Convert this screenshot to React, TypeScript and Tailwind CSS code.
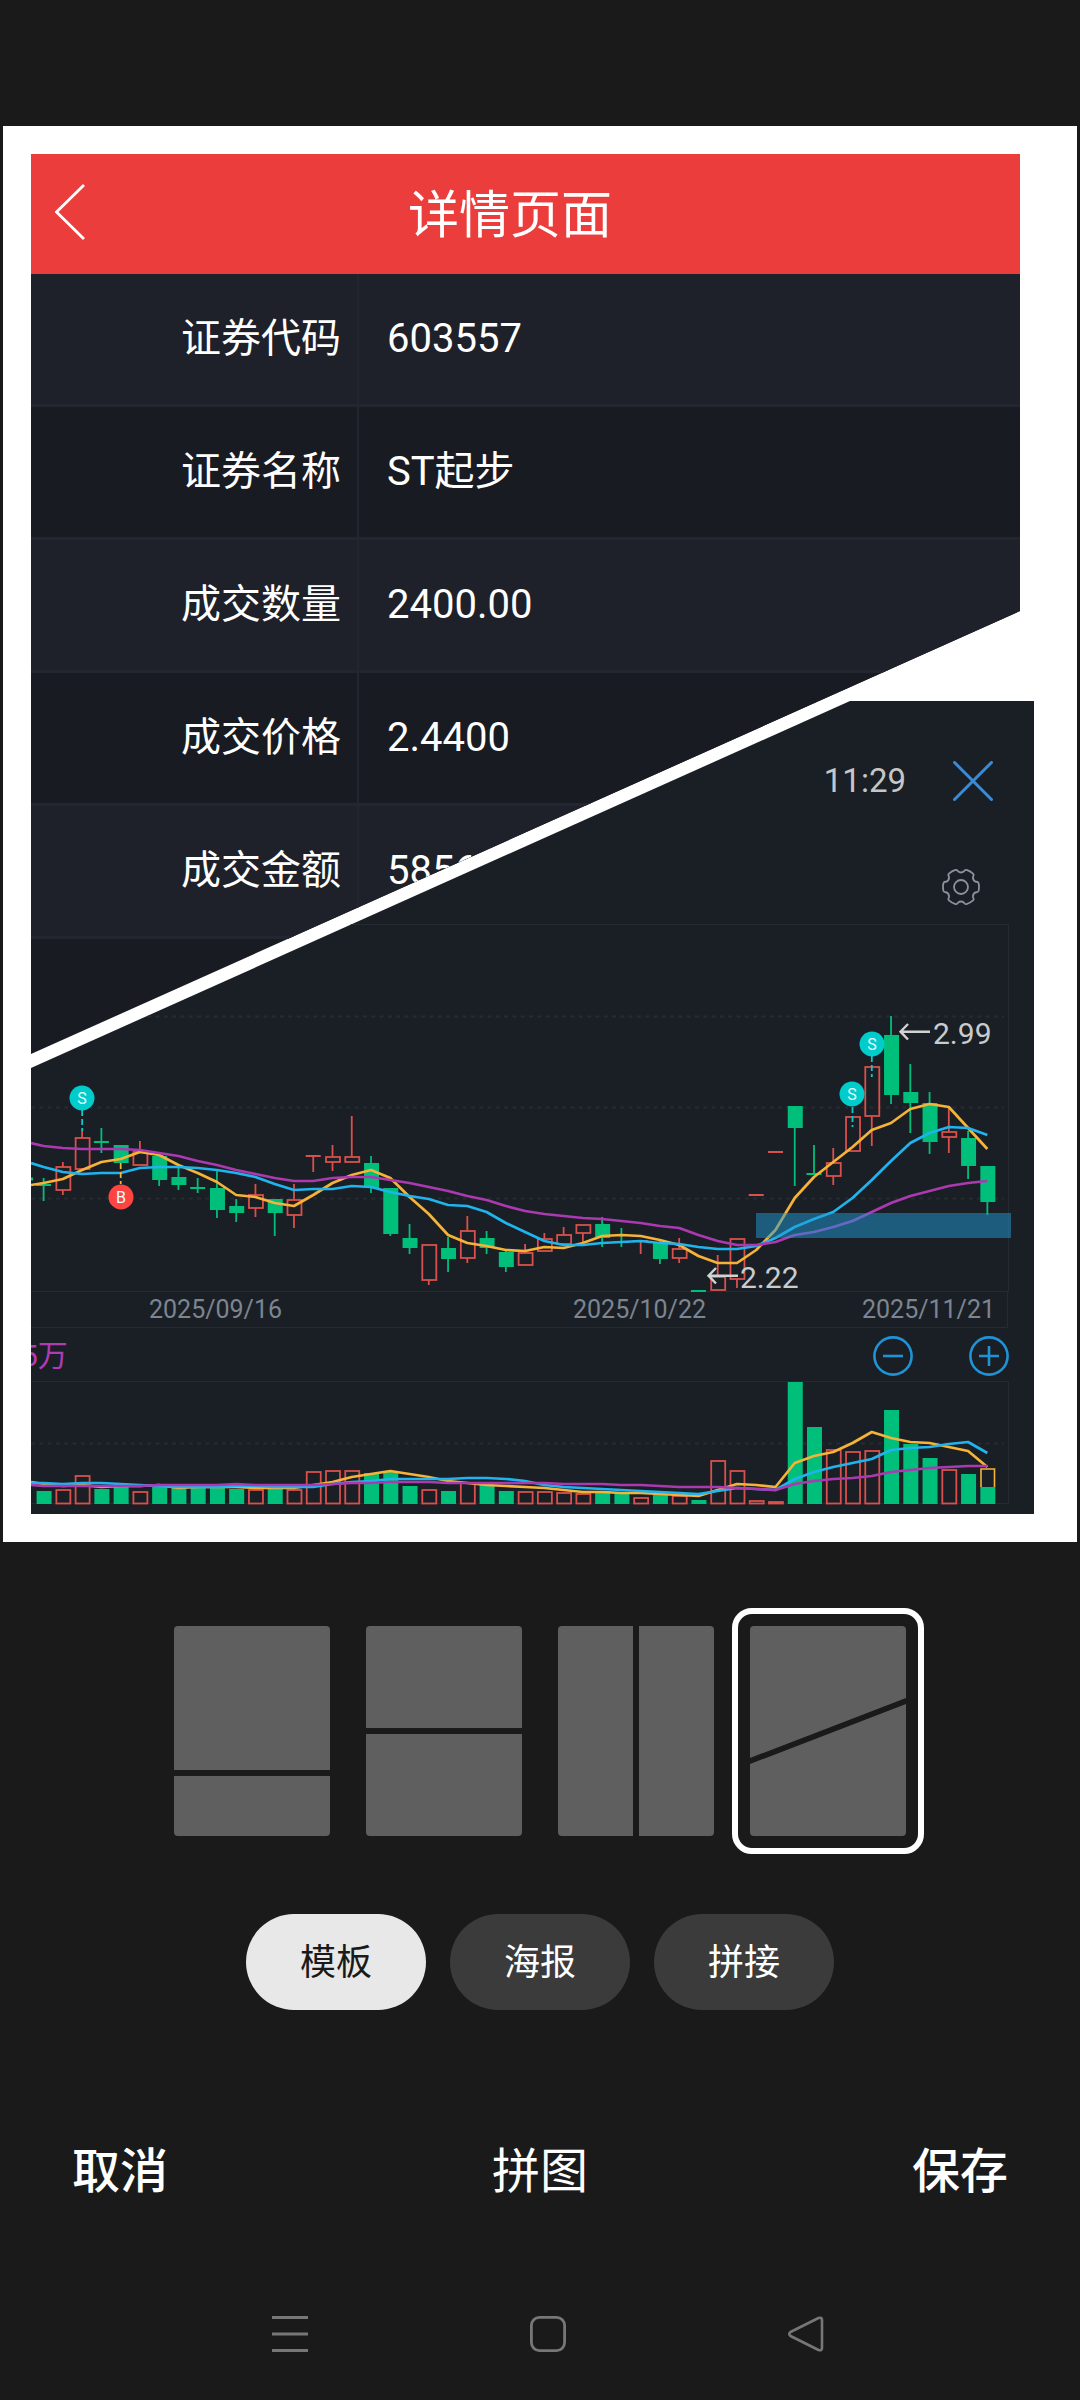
// src/pages/CollageEditor.tsx
import React, { useState } from 'react';

const GREEN = '#00bf7a';
const RED = '#d9504c';
const ORANGE = '#f5b338';
const BLUE = '#1fb4ee';
const PURPLE = '#ab39b0';
const GRID = '#262b32';

const details = [
  { label: '证券代码', value: '603557' },
  { label: '证券名称', value: 'ST起步' },
  { label: '成交数量', value: '2400.00' },
  { label: '成交价格', value: '2.4400' },
  { label: '成交金额', value: '5856.00' },
];

// up/down, high, body top, body bottom, low
type Candle = ['u' | 'd', number, number, number, number];

const candles: Candle[] = [
  ['d', 1178, 1185, 1185, 1201],
  ['u', 1162, 1167, 1190, 1195],
  ['u', 1130, 1138, 1169, 1169],
  ['d', 1128, 1142, 1142, 1153],
  ['d', 1145, 1145, 1163, 1163],
  ['u', 1141, 1152, 1165, 1165],
  ['d', 1155, 1156, 1180, 1186],
  ['d', 1168, 1177, 1185, 1190],
  ['d', 1178, 1188, 1188, 1193],
  ['d', 1171, 1188, 1210, 1218],
  ['d', 1199, 1206, 1213, 1222],
  ['u', 1184, 1195, 1208, 1217],
  ['d', 1199, 1199, 1213, 1236],
  ['u', 1184, 1200, 1215, 1228],
  ['u', 1156, 1156, 1156, 1172],
  ['u', 1145, 1157, 1162, 1171],
  ['u', 1116, 1157, 1162, 1162],
  ['d', 1156, 1163, 1188, 1193],
  ['d', 1188, 1188, 1234, 1236],
  ['d', 1224, 1238, 1248, 1254],
  ['u', 1245, 1245, 1280, 1285],
  ['d', 1237, 1248, 1259, 1272],
  ['u', 1216, 1231, 1258, 1263],
  ['d', 1231, 1238, 1248, 1254],
  ['d', 1251, 1252, 1267, 1272],
  ['u', 1244, 1253, 1265, 1265],
  ['u', 1233, 1239, 1251, 1251],
  ['u', 1227, 1235, 1244, 1244],
  ['u', 1225, 1225, 1233, 1242],
  ['d', 1217, 1224, 1238, 1247],
  ['d', 1228, 1242, 1242, 1247],
  ['u', 1240, 1241, 1241, 1254],
  ['d', 1241, 1242, 1259, 1264],
  ['u', 1238, 1249, 1258, 1263],
  ['d', 1291, 1291, 1291, 1291],
  ['u', 1255, 1277, 1290, 1290],
  ['u', 1239, 1239, 1279, 1288],
  ['u', 1195, 1195, 1195, 1195],
  ['u', 1152, 1152, 1152, 1152],
  ['d', 1106, 1106, 1128, 1186],
  ['d', 1145, 1174, 1174, 1174],
  ['u', 1148, 1163, 1176, 1185],
  ['u', 1117, 1117, 1151, 1151],
  ['u', 1067, 1067, 1116, 1146],
  ['d', 1016, 1035, 1095, 1104],
  ['d', 1064, 1092, 1103, 1133],
  ['d', 1092, 1103, 1142, 1154],
  ['u', 1107, 1132, 1137, 1153],
  ['d', 1131, 1138, 1166, 1179],
  ['d', 1166, 1166, 1202, 1215],
];

// the first value of each average lies on the left edge, one slot before the first candle
const priceOrange = [
  1185, 1183, 1179, 1170, 1162, 1159, 1152, 1155, 1165, 1173, 1182, 1195, 1197, 1203, 1206, 1195, 1183, 1175, 1170,
  1178, 1197, 1214, 1235, 1243, 1246, 1250, 1251, 1247, 1248, 1243, 1236, 1235, 1236, 1240, 1245, 1256, 1263, 1263,
  1250, 1230, 1198, 1177, 1162, 1147, 1130, 1123, 1109, 1104, 1107, 1128, 1149,
];
const priceBlue = [
  1163, 1167, 1172, 1174, 1173, 1173, 1168, 1167, 1167, 1168, 1170, 1173, 1177, 1184, 1190, 1189, 1189, 1186, 1187,
  1192, 1196, 1199, 1205, 1206, 1212, 1223, 1232, 1241, 1245, 1245, 1243, 1242, 1241, 1243, 1244, 1247, 1249, 1249,
  1246, 1238, 1227, 1219, 1212, 1198, 1180, 1161, 1143, 1133, 1127, 1128, 1135,
];
const pricePurple = [
  1143, 1146, 1148, 1149, 1149, 1149, 1150, 1153, 1156, 1161, 1165, 1170, 1174, 1178, 1181, 1181, 1178, 1177, 1177,
  1180, 1183, 1187, 1191, 1196, 1200, 1206, 1211, 1214, 1216, 1218, 1219, 1221, 1223, 1226, 1228, 1235, 1241, 1245,
  1245, 1242, 1235, 1232, 1227, 1221, 1212, 1203, 1196, 1191, 1186, 1183, 1181,
];

const volumes = [
  1491, 1490, 1476, 1489, 1487, 1492, 1487, 1487, 1487, 1487, 1489, 1490, 1488, 1490, 1472, 1471, 1471, 1473, 1472,
  1486, 1490, 1491, 1483, 1485, 1491, 1492, 1492, 1493, 1494, 1491, 1493, 1498, 1495, 1496, 1500, 1461, 1471, 1501,
  1502, 1382, 1427, 1450, 1452, 1451, 1410, 1444, 1458, 1470, 1474, 1487,
];
const volumeDown = [
  0, 3, 4, 6, 7, 8, 9, 10, 12, 17, 18, 19, 21, 23, 24, 29, 30, 32, 34, 39, 40, 44, 45, 46, 48, 49,
];
const volumeOrange = [
  1482, 1484, 1486, 1485, 1487, 1486, 1486, 1485, 1488, 1487, 1487, 1487, 1488, 1488, 1488, 1485, 1482, 1477, 1474,
  1471, 1474, 1477, 1481, 1483, 1485, 1486, 1487, 1488, 1490, 1492, 1492, 1493, 1493, 1494, 1495, 1496, 1490, 1484,
  1485, 1487, 1463, 1456, 1452, 1443, 1432, 1438, 1442, 1443, 1447, 1451, 1467,
];
const volumeBlue = [
  1483, 1483, 1484, 1483, 1483, 1484, 1485, 1486, 1487, 1487, 1487, 1486, 1486, 1487, 1487, 1487, 1484, 1482, 1481,
  1479, 1479, 1479, 1479, 1478, 1478, 1479, 1481, 1485, 1487, 1488, 1489, 1490, 1491, 1492, 1493, 1494, 1491, 1488,
  1489, 1490, 1479, 1472, 1467, 1463, 1459, 1450, 1448, 1447, 1444, 1442, 1453,
];
const volumePurple = [
  1485, 1486, 1486, 1486, 1486, 1486, 1486, 1485, 1485, 1485, 1485, 1484, 1485, 1485, 1485, 1485, 1484, 1483, 1483,
  1482, 1482, 1482, 1483, 1483, 1483, 1483, 1483, 1483, 1484, 1484, 1484, 1485, 1485, 1486, 1487, 1487, 1487, 1488,
  1489, 1490, 1484, 1481, 1479, 1478, 1476, 1472, 1470, 1468, 1467, 1466, 1466,
];

const slotX = (i: number) => 43.6 + i * 19.26;

const toPoints = (values: number[]) =>
  values.map((y, i) => `${i === 0 ? 31 : slotX(i - 1)},${y}`).join(' ');

const Averages = ({ orange, blue, purple }: { orange: number[]; blue: number[]; purple: number[] }) => (
  <g fill="none" strokeWidth="2.7" strokeLinejoin="round">
    <polyline points={toPoints(orange)} stroke={ORANGE} />
    <polyline points={toPoints(blue)} stroke={BLUE} />
    <polyline points={toPoints(purple)} stroke={PURPLE} />
  </g>
);

const CandleShape = ({ index, candle }: { index: number; candle: Candle }) => {
  const [dir, high, top, bottom, low] = candle;
  const x = slotX(index);
  const color = dir === 'u' ? RED : GREEN;
  return (
    <g stroke={color} strokeWidth="1.8">
      {high < top && <line x1={x} x2={x} y1={high} y2={top} />}
      {low > bottom && <line x1={x} x2={x} y1={bottom} y2={low} />}
      {top === bottom ? (
        <line x1={x - 7.5} x2={x + 7.5} y1={top} y2={top} strokeWidth="2" />
      ) : dir === 'u' ? (
        <rect x={x - 6.5} y={top} width="14" height={bottom - top} fill="none" />
      ) : (
        <rect x={x - 7} y={top} width="15" height={bottom - top} fill={color} stroke="none" />
      )}
    </g>
  );
};

const Marker = ({ x, y, text, color }: { x: number; y: number; text: string; color: string }) => (
  <g>
    <circle cx={x} cy={y} r="12.5" fill={color} />
    <text x={x} y={y + 6} fontSize="16" fill="#e9ffff" textAnchor="middle">
      {text}
    </text>
  </g>
);

const PriceChart = () => (
  <svg viewBox="31 920 1003 411" className="block w-full">
    <g stroke={GRID} strokeWidth="1" fill="none">
      <path d="M31 924.5H1008.5V1291.5H31" />
      <path d="M31 1327.5H1007.5V1291.5" />
      <path d="M31 1016.5H1004M31 1107.5H1004M31 1198.5H1004" strokeWidth="1.8" strokeDasharray="4 4.3" />
    </g>
    <line x1="31" x2="33" y1="1179" y2="1179" stroke={GREEN} strokeWidth="3" />
    {candles.map((candle, i) => (
      <CandleShape key={i} index={i} candle={candle} />
    ))}
    <Averages orange={priceOrange} blue={priceBlue} purple={pricePurple} />
    <rect x="756" y="1213" width="255" height="25" fill="#2299d6" opacity="0.5" />

    <g strokeWidth="1.8" strokeDasharray="6 3">
      <path d="M82.2 1110V1131M871.8 1056V1077M852.5 1107V1127" stroke="#16c5cc" />
      <path d="M120.7 1163V1184" stroke={ORANGE} />
    </g>
    <Marker x={82} y={1098} text="S" color="#00cccc" />
    <Marker x={121} y={1197} text="B" color="#ff4541" />
    <Marker x={872} y={1044} text="S" color="#00cccc" />
    <Marker x={852} y={1094} text="S" color="#00cccc" />

    <g stroke="#d0d2d3" strokeWidth="2.4" fill="none">
      <path d="M930 1031.7H900.5M908 1024L900.5 1031.7L908 1039.5" />
      <path d="M738 1275.7H708.5M716 1268L708.5 1275.7L716 1283.5" />
    </g>
    <g fontSize="30" fill="#c9cbcd">
      <text x="933" y="1044">2.99</text>
      <text x="740" y="1288">2.22</text>
    </g>
    <g fontSize="25" fill="#7c8590">
      <text x="149" y="1318">2025/09/16</text>
      <text x="573" y="1318">2025/10/22</text>
      <text x="862" y="1318">2025/11/21</text>
    </g>
  </svg>
);

const VolumeChart = () => (
  <svg viewBox="31 1381 1003 133" className="block w-full">
    <g stroke={GRID} strokeWidth="1" fill="none">
      <path d="M31 1381.5H1008.5V1503.5H31" />
      <path d="M31 1443.5H1004" strokeWidth="1.8" strokeDasharray="4 4.3" />
    </g>
    {volumes.map((top, i) =>
      volumeDown.includes(i) ? (
        <rect key={i} x={slotX(i) - 7} y={top} width="15" height={1504 - top} fill={GREEN} />
      ) : (
        <rect
          key={i}
          x={slotX(i) - 6.5}
          y={top}
          width="14"
          height={1503.5 - top}
          fill="none"
          stroke={RED}
          strokeWidth="1.8"
        />
      )
    )}
    <path d="M981 1487V1469H994.5V1487" fill="none" stroke={ORANGE} strokeWidth="1.6" />
    <Averages orange={volumeOrange} blue={volumeBlue} purple={volumePurple} />
  </svg>
);

// six rounded teeth with a shallow notch between each pair
const gearPath = () => {
  const at = (r: number, deg: number) => {
    const a = (deg * Math.PI) / 180;
    return `${(19 + r * Math.cos(a)).toFixed(2)} ${(19 + r * Math.sin(a)).toFixed(2)}`;
  };
  let d = '';
  for (let k = 0; k < 6; k++) {
    const c = k * 60;
    d += `${k === 0 ? 'M' : 'L'}${at(18, c - 12)}Q${at(18.4, c)} ${at(18, c + 12)}`;
    d += `Q${at(17.8, c + 18)} ${at(16, c + 19)}Q${at(13.2, c + 30)} ${at(16, c + 41)}Q${at(17.8, c + 42)} ${at(18, c + 48)}`;
  }
  return d + 'Z';
};

const templates = [
  {
    name: '模板一',
    shape: (
      <span className="flex h-full flex-col gap-[6px]">
        <span className="h-[144px] rounded-t-[4px] bg-[#5f5f5f]" />
        <span className="flex-1 rounded-b-[4px] bg-[#5f5f5f]" />
      </span>
    ),
  },
  {
    name: '模板二',
    shape: (
      <span className="flex h-full flex-col gap-[6px]">
        <span className="flex-1 rounded-t-[4px] bg-[#5f5f5f]" />
        <span className="flex-1 rounded-b-[4px] bg-[#5f5f5f]" />
      </span>
    ),
  },
  {
    name: '模板三',
    shape: (
      <span className="flex h-full gap-[6px]">
        <span className="flex-1 rounded-l-[4px] bg-[#5f5f5f]" />
        <span className="flex-1 rounded-r-[4px] bg-[#5f5f5f]" />
      </span>
    ),
  },
  {
    name: '模板四',
    shape: (
      <svg viewBox="0 0 156 210" className="block h-full w-full" fill="#5f5f5f">
        <path d="M4 0H152Q156 0 156 4V72L0 132V4Q0 0 4 0Z" />
        <path d="M0 138L156 78V206Q156 210 152 210H4Q0 210 0 206Z" />
      </svg>
    ),
  },
];

const modes = ['模板', '海报', '拼接'];

const DetailPanel = () => (
  <section className="mr-[57px] bg-[#191b23] text-white [clip-path:polygon(0_0,100%_0,100%_457px,0_100%)]">
    <header className="flex h-[120px] items-center bg-[#eb3d3b] pr-[115px]">
      <button type="button" aria-label="返回" className="w-[84px] pb-1 pl-6">
        <svg width="30" height="56" viewBox="0 0 30 56" fill="none" stroke="#fff" strokeWidth="2.8">
          <path d="M29 1L1.500 28L29 55" />
        </svg>
      </button>
      <h1 className="flex-1 pt-[3px] text-center text-[51px] leading-[60px]">详情页面</h1>
    </header>
    <table className="w-full table-fixed border-separate border-spacing-0 text-[40px] leading-[48px]">
      <tbody>
        {details.map((row) => (
          <tr key={row.label} className="h-[133px] odd:bg-[#1e2129] even:bg-[#191b23]">
            <th
              scope="row"
              className="w-[328px] border-r-2 border-b-3 border-[#22272f] pr-4 text-right font-normal"
            >
              {row.label}
            </th>
            <td className="border-b-3 border-[#22272f] pl-7">{row.value}</td>
          </tr>
        ))}
      </tbody>
    </table>
    <div className="h-[115px]" />
  </section>
);

const ChartPanel = () => (
  <section className="-mt-[353px] mr-[43px] bg-[#1a1f25] [clip-path:polygon(0_367px,819px_0,100%_0,100%_100%,0_100%)]">
    <div className="flex items-center justify-end gap-[47px] pt-[60px] pr-[41px]">
      <span className="text-[33px] leading-10 text-[#c6c6c6]">11:29</span>
      <button type="button" aria-label="关闭">
        <svg width="40" height="40" viewBox="0 0 40 40" stroke="#3a8bd6" strokeWidth="3" strokeLinecap="round">
          <path d="M1.500 1.500L38.500 38.500M38.500 1.500L1.500 38.500" />
        </svg>
      </button>
    </div>
    <div className="mt-[67px] mb-[14px] flex justify-end pr-[54px]">
      <button type="button" aria-label="设置">
        <svg width="38" height="38" viewBox="0 0 38 38" fill="none" stroke="#8b929b" strokeWidth="1.8">
          <path d={gearPath()} strokeLinejoin="round" />
          <circle cx="19" cy="19" r="7" />
        </svg>
      </button>
    </div>
    <PriceChart />
    <div className="flex h-[50px] items-center justify-between pr-[25px]">
      <span className="-ml-[10px] text-[30px] leading-10 text-[#b03bb5]">5万</span>
      <div className="flex gap-14">
        <button type="button" aria-label="缩小">
          <svg width="40" height="40" viewBox="0 0 40 40" fill="none" stroke="#1f93d6" strokeWidth="2.6">
            <circle cx="20" cy="20" r="18.600" />
            <path d="M10 20H30" />
          </svg>
        </button>
        <button type="button" aria-label="放大">
          <svg width="40" height="40" viewBox="0 0 40 40" fill="none" stroke="#1f93d6" strokeWidth="2.6">
            <circle cx="20" cy="20" r="18.600" />
            <path d="M10 20H30M20 10V30" />
          </svg>
        </button>
      </div>
    </div>
    <VolumeChart />
  </section>
);

const CollageEditor = () => {
  const [template, setTemplate] = useState(3);
  const [mode, setMode] = useState('模板');

  return (
    <div className="min-h-screen bg-[#1a1a1a] pt-[126px] pb-12 font-['Roboto','Noto_Sans_CJK_SC',sans-serif]">
      <main className="mx-[3px] bg-white p-7 pr-0">
        <DetailPanel />
        <ChartPanel />
      </main>

      <div className="mt-[66px] flex justify-center">
        {templates.map((item, i) => (
          <button
            key={item.name}
            type="button"
            aria-label={item.name}
            aria-pressed={template === i}
            onClick={() => setTemplate(i)}
            className={`h-[246px] w-[192px] rounded-[20px] border-6 p-3 ${
              template === i ? 'border-white' : 'border-transparent'
            }`}
          >
            {item.shape}
          </button>
        ))}
      </div>

      <div className="mt-[60px] flex justify-center gap-6">
        {modes.map((name) => (
          <button
            key={name}
            type="button"
            aria-pressed={mode === name}
            onClick={() => setMode(name)}
            className={`h-24 w-[180px] rounded-full pt-[2px] text-[36px] leading-[48px] ${
              mode === name ? 'bg-[#e8e8e8] text-[#1a1a1a]' : 'bg-[#3b3b3b] text-white'
            }`}
          >
            {name}
          </button>
        ))}
      </div>

      <div className="mt-28 flex h-24 items-center justify-between px-[72px] pt-1 text-[48px] leading-[60px] text-white">
        <button type="button" className="font-medium">
          取消
        </button>
        <h2>拼图</h2>
        <button type="button" className="font-medium">
          保存
        </button>
      </div>

      <nav className="mt-[98px] flex justify-center gap-[222px] pl-4">
        <button type="button" aria-label="菜单">
          <svg width="36" height="36" viewBox="0 0 36 36" stroke="#777" strokeWidth="3">
            <path d="M0 1.500H36M0 18H36M0 34.500H36" />
          </svg>
        </button>
        <button type="button" aria-label="主页">
          <svg width="36" height="36" viewBox="0 0 36 36" fill="none" stroke="#777" strokeWidth="2.800">
            <rect x="1.400" y="1.400" width="33.200" height="33.200" rx="8" />
          </svg>
        </button>
        <button type="button" aria-label="后退">
          <svg
            width="36"
            height="36"
            viewBox="0 0 36 36"
            fill="none"
            stroke="#777"
            strokeWidth="2.600"
            strokeLinejoin="round"
          >
            <path d="M30.500 2L2.500 16Q0 18 2.500 20L30.500 34Q34 35 34 32V4Q34 1 30.500 2Z" />
          </svg>
        </button>
      </nav>
    </div>
  );
};

export default CollageEditor;
